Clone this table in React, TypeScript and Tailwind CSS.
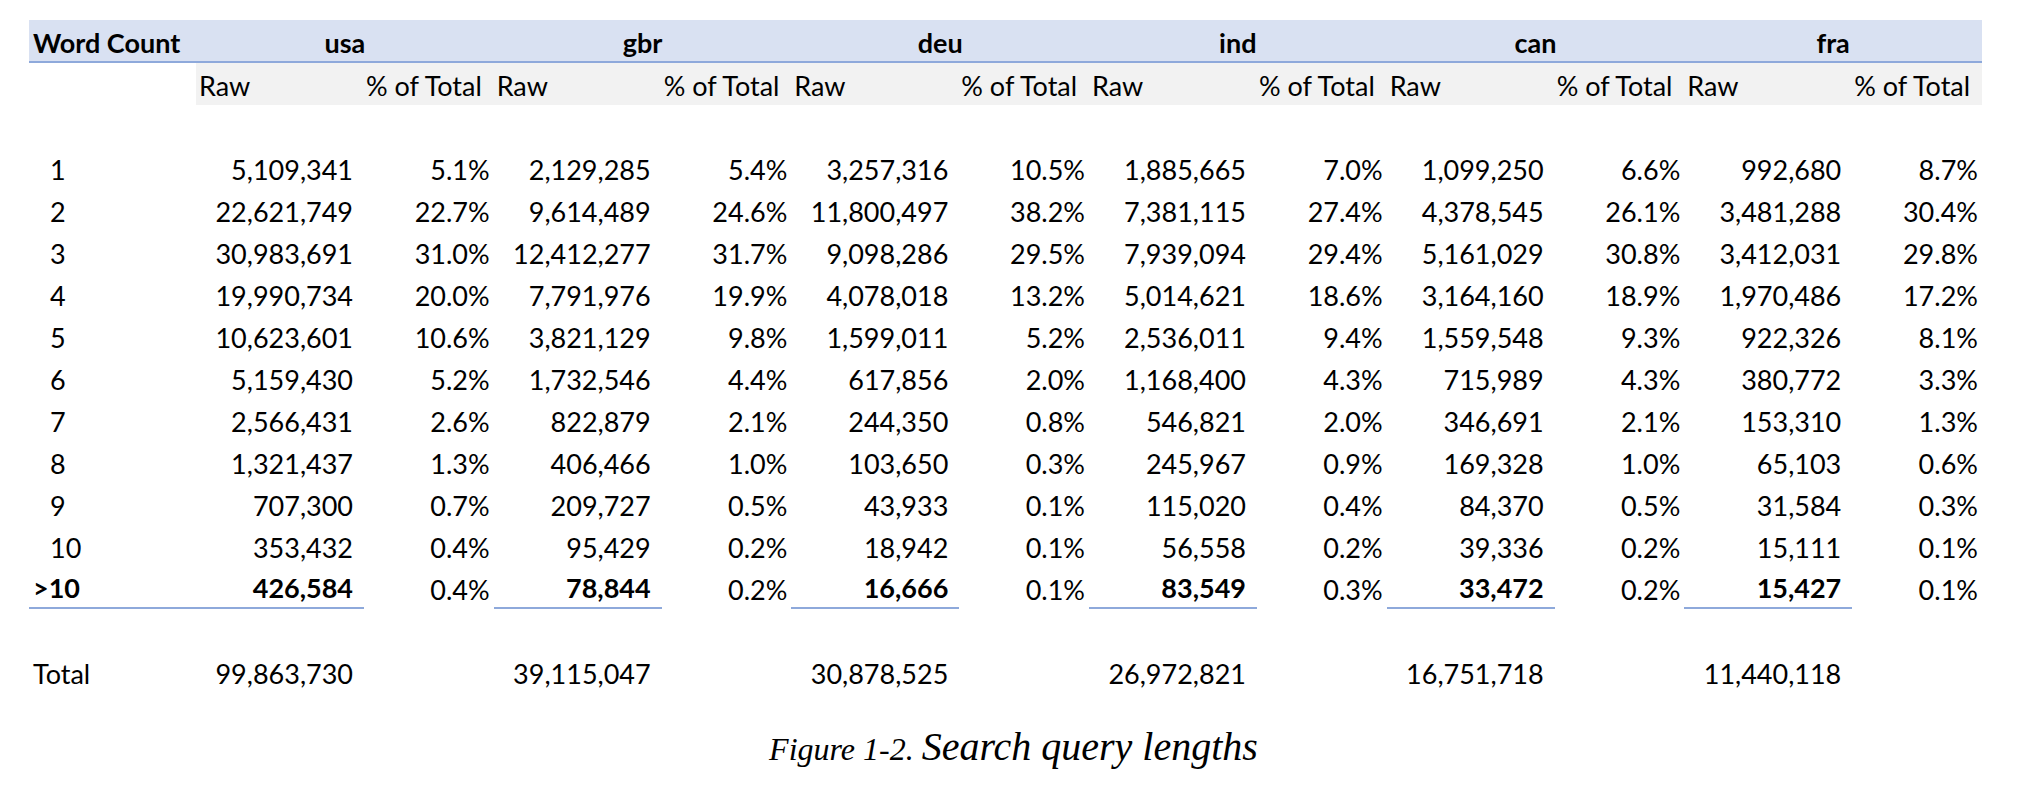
import React from "react";

type Country = {
  code: string;
  raw: string[];
  pct: string[];
  total: string;
};

const COUNTRIES: Country[] = [
  {
    code: "usa",
    raw: ["5,109,341", "22,621,749", "30,983,691", "19,990,734", "10,623,601", "5,159,430", "2,566,431", "1,321,437", "707,300", "353,432", "426,584"],
    pct: ["5.1%", "22.7%", "31.0%", "20.0%", "10.6%", "5.2%", "2.6%", "1.3%", "0.7%", "0.4%", "0.4%"],
    total: "99,863,730",
  },
  {
    code: "gbr",
    raw: ["2,129,285", "9,614,489", "12,412,277", "7,791,976", "3,821,129", "1,732,546", "822,879", "406,466", "209,727", "95,429", "78,844"],
    pct: ["5.4%", "24.6%", "31.7%", "19.9%", "9.8%", "4.4%", "2.1%", "1.0%", "0.5%", "0.2%", "0.2%"],
    total: "39,115,047",
  },
  {
    code: "deu",
    raw: ["3,257,316", "11,800,497", "9,098,286", "4,078,018", "1,599,011", "617,856", "244,350", "103,650", "43,933", "18,942", "16,666"],
    pct: ["10.5%", "38.2%", "29.5%", "13.2%", "5.2%", "2.0%", "0.8%", "0.3%", "0.1%", "0.1%", "0.1%"],
    total: "30,878,525",
  },
  {
    code: "ind",
    raw: ["1,885,665", "7,381,115", "7,939,094", "5,014,621", "2,536,011", "1,168,400", "546,821", "245,967", "115,020", "56,558", "83,549"],
    pct: ["7.0%", "27.4%", "29.4%", "18.6%", "9.4%", "4.3%", "2.0%", "0.9%", "0.4%", "0.2%", "0.3%"],
    total: "26,972,821",
  },
  {
    code: "can",
    raw: ["1,099,250", "4,378,545", "5,161,029", "3,164,160", "1,559,548", "715,989", "346,691", "169,328", "84,370", "39,336", "33,472"],
    pct: ["6.6%", "26.1%", "30.8%", "18.9%", "9.3%", "4.3%", "2.1%", "1.0%", "0.5%", "0.2%", "0.2%"],
    total: "16,751,718",
  },
  {
    code: "fra",
    raw: ["992,680", "3,481,288", "3,412,031", "1,970,486", "922,326", "380,772", "153,310", "65,103", "31,584", "15,111", "15,427"],
    pct: ["8.7%", "30.4%", "29.8%", "17.2%", "8.1%", "3.3%", "1.3%", "0.6%", "0.3%", "0.1%", "0.1%"],
    total: "11,440,118",
  },
];

const LABELS = ["1", "2", "3", "4", "5", "6", "7", "8", "9", "10", ">10"];

// Same column template for every row so the cells line up like a sheet.
const GRID = "grid w-fit grid-cols-[167px_repeat(6,168px_129.67px)]";
const CELL = "flex h-[42px] items-end pb-[6px] leading-none";

function Row({ children, className = "" }: { children: React.ReactNode; className?: string }) {
  return <div className={`${GRID} ${className}`}>{children}</div>;
}

export default function App() {
  return (
    <div className="min-h-[789px] w-[2027px] bg-white text-black">
      <div className="pl-[29px] pt-[20px] font-['Lato',sans-serif] text-[27px]">
        {/* country header */}
        <Row className="border-b-2 border-[#8EA9DB] bg-[#D9E1F2]">
          <div className="flex h-[41px] items-end pb-[5px] pl-[4px] font-bold leading-none">Word Count</div>
          {COUNTRIES.map((c) => (
            <div
              key={c.code}
              className="col-span-2 flex h-[41px] items-end justify-center pb-[5px] font-bold leading-none"
            >
              {c.code}
            </div>
          ))}
        </Row>

        {/* sub header */}
        <Row>
          <div className={CELL} />
          {COUNTRIES.map((c) => (
            <React.Fragment key={c.code}>
              <div className={`${CELL} bg-[#F2F2F2] pl-[3px]`}>Raw</div>
              <div className={`${CELL} bg-[#F2F2F2] pl-[2px]`}>% of Total</div>
            </React.Fragment>
          ))}
        </Row>

        <Row>
          <div className={CELL} />
        </Row>

        {LABELS.map((label, i) => {
          const last = i === LABELS.length - 1;
          const rule = last ? "border-b-2 border-[#8EA9DB]" : "";
          return (
            <Row key={label}>
              <div className={`${CELL} ${rule} ${last ? "pl-[4px] font-bold" : "pl-[21px]"}`}>{label}</div>
              {COUNTRIES.map((c) => (
                <React.Fragment key={c.code}>
                  <div className={`${CELL} ${rule} justify-end pr-[11px] ${last ? "font-bold" : ""}`}>
                    {c.raw[i]}
                  </div>
                  <div className={`${CELL} justify-end pr-[4px]`}>{c.pct[i]}</div>
                </React.Fragment>
              ))}
            </Row>
          );
        })}

        <Row>
          <div className={CELL} />
        </Row>

        <Row>
          <div className={`${CELL} pl-[4px]`}>Total</div>
          {COUNTRIES.map((c) => (
            <React.Fragment key={c.code}>
              <div className={`${CELL} justify-end pr-[11px]`}>{c.total}</div>
              <div className={CELL} />
            </React.Fragment>
          ))}
        </Row>
      </div>

      <div className="flex items-baseline justify-center gap-[8px] pt-[34px] font-['Liberation_Serif',serif] italic leading-none">
        <span className="text-[32px]">Figure 1-2.</span>
        <span className="text-[40px]">Search query lengths</span>
      </div>
    </div>
  );
}
